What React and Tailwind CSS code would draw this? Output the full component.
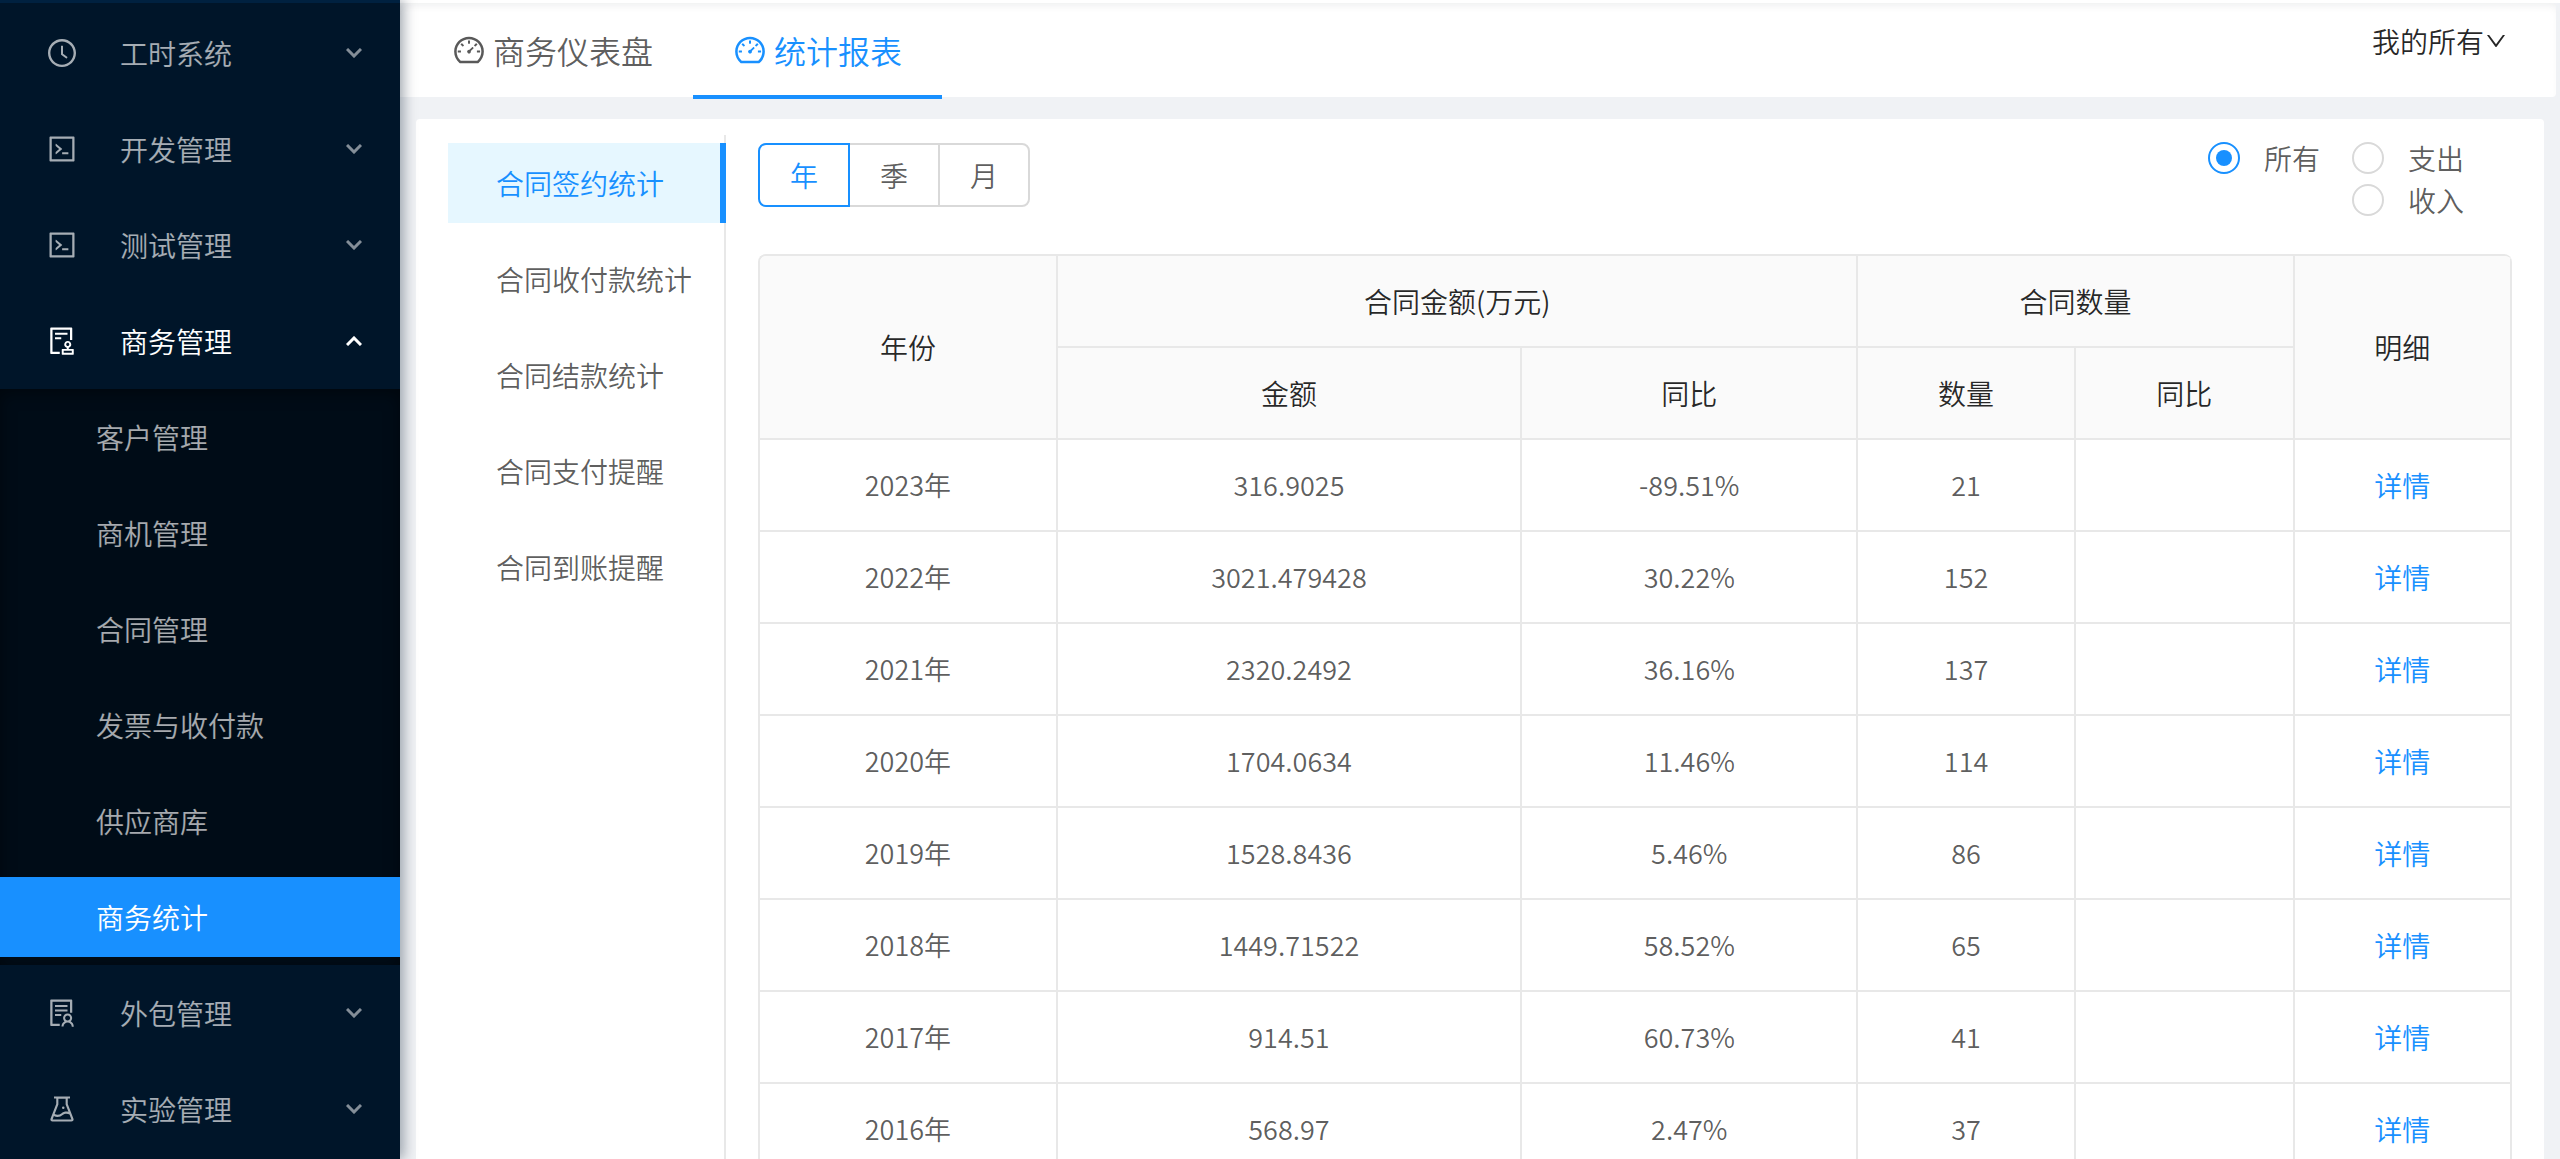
import React, { useState } from 'react';
import {
  AiOutlineAudit,
  AiOutlineClockCircle,
  AiOutlineCode,
  AiOutlineDashboard,
  AiOutlineDown,
  AiOutlineExperiment,
  AiOutlineSolution,
} from 'react-icons/ai';

const menus = [
  { name: '工时系统', icon: AiOutlineClockCircle },
  { name: '开发管理', icon: AiOutlineCode },
  { name: '测试管理', icon: AiOutlineCode },
  {
    name: '商务管理',
    icon: AiOutlineAudit,
    children: ['客户管理', '商机管理', '合同管理', '发票与收付款', '供应商库', '商务统计'],
  },
  { name: '外包管理', icon: AiOutlineSolution },
  { name: '实验管理', icon: AiOutlineExperiment },
];

const tabs = ['商务仪表盘', '统计报表'];
const reports = ['合同签约统计', '合同收付款统计', '合同结款统计', '合同支付提醒', '合同到账提醒'];
const periods = ['年', '季', '月'];

const rows = [
  { year: '2023年', amount: '316.9025', rate: '-89.51%', count: 21 },
  { year: '2022年', amount: '3021.479428', rate: '30.22%', count: 152 },
  { year: '2021年', amount: '2320.2492', rate: '36.16%', count: 137 },
  { year: '2020年', amount: '1704.0634', rate: '11.46%', count: 114 },
  { year: '2019年', amount: '1528.8436', rate: '5.46%', count: 86 },
  { year: '2018年', amount: '1449.71522', rate: '58.52%', count: 65 },
  { year: '2017年', amount: '914.51', rate: '60.73%', count: 41 },
  { year: '2016年', amount: '568.97', rate: '2.47%', count: 37 },
];

function Arrow({ open }) {
  return (
    <svg
      viewBox="0 0 16 10"
      fill="none"
      stroke="currentColor"
      strokeWidth="3"
      className={open ? 'h-[10px] w-4 rotate-180' : 'h-[10px] w-4 opacity-80'}
    >
      <path d="M1 1l7 7 7-7" />
    </svg>
  );
}

function Sidebar() {
  const [active, setActive] = useState('商务统计');
  const [open, setOpen] = useState('商务管理');

  return (
    <aside className="z-10 w-[400px] shrink-0 overflow-hidden border-t-3 border-[#002140] bg-[#001529] pt-[2px] text-[28px] text-white/65 shadow-[4px_0_12px_rgba(0,21,41,0.35)]">
      {menus.map(({ name, icon: Icon, children }) => {
        const isOpen = open === name && !!children;
        return (
          <div key={name}>
            <div className="py-2">
              <button
                onClick={() => setOpen(isOpen ? '' : name)}
                className={`flex h-20 w-full items-center pr-[38px] pl-[46px] ${isOpen ? 'text-white' : ''}`}
              >
                <Icon className="mr-[42px] size-8" />
                <span className="flex-1 text-left">{name}</span>
                <Arrow open={isOpen} />
              </button>
            </div>
            {isOpen && (
              <ul className="flex flex-col gap-4 bg-[#000c17] py-2 shadow-[inset_0_4px_16px_rgba(0,0,0,0.45)]">
                {children.map((child) => (
                  <li key={child}>
                    <button
                      onClick={() => setActive(child)}
                      className={`h-20 w-full pl-24 text-left ${active === child ? 'bg-[#1890ff] text-white' : ''}`}
                    >
                      {child}
                    </button>
                  </li>
                ))}
              </ul>
            )}
          </div>
        );
      })}
    </aside>
  );
}

function Header() {
  const [tab, setTab] = useState('统计报表');

  return (
    <header className="mr-1 flex h-[94px] shrink-0 items-start justify-between rounded-r bg-white pr-12 pl-3 shadow-[inset_0_6px_8px_-4px_rgba(0,21,41,0.08)]">
      <nav className="flex">
        {tabs.map((t) => (
          <button
            key={t}
            onClick={() => setTab(t)}
            className={`flex h-24 items-center gap-[7px] border-b-4 px-10 pt-[2px] text-[32px] ${
              tab === t ? 'border-b-[#1890ff] text-[#1890ff]' : 'border-b-transparent text-black/65'
            }`}
          >
            <AiOutlineDashboard className="size-[34px]" />
            {t}
          </button>
        ))}
      </nav>
      <button aria-haspopup="menu" className="flex h-[76px] items-center text-[28px] text-black/85">
        我的所有
        <AiOutlineDown className="size-6" />
      </button>
    </header>
  );
}

function ReportMenu() {
  const [report, setReport] = useState(reports[0]);

  return (
    <ul className="flex w-[278px] shrink-0 flex-col gap-4 border-r-2 border-[#e8e8e8] pt-2 text-[28px]">
      {reports.map((r) => (
        <li key={r} className="-mr-[2px]">
          <button
            onClick={() => setReport(r)}
            className={`h-20 w-full pl-12 text-left whitespace-nowrap ${
              report === r ? 'border-r-6 border-[#1890ff] bg-[#e6f7ff] text-[#1890ff]' : 'text-black/65'
            }`}
          >
            {r}
          </button>
        </li>
      ))}
    </ul>
  );
}

function TypeRadio({ label, checked, onChange }) {
  return (
    <label className="flex h-[42px] items-center gap-6">
      <input
        type="radio"
        name="type"
        checked={checked}
        onChange={onChange}
        className="grid size-8 appearance-none place-content-center rounded-full border-2 border-[#d9d9d9] before:size-4 before:rounded-full checked:border-[#1890ff] checked:before:bg-[#1890ff]"
      />
      {label}
    </label>
  );
}

function Toolbar() {
  const [period, setPeriod] = useState('年');
  const [type, setType] = useState('所有');

  return (
    <div className="flex h-[119px] items-start justify-between pr-12 text-[28px] text-black/65">
      <div className="mt-2 flex">
        {periods.map((p) => (
          <button
            key={p}
            onClick={() => setPeriod(p)}
            className={`-ml-[2px] h-16 border-2 px-[30px] first:ml-0 first:rounded-l-lg last:rounded-r-lg ${
              period === p ? 'z-1 border-[#1890ff] text-[#1890ff]' : 'border-[#d9d9d9]'
            }`}
          >
            {p}
          </button>
        ))}
      </div>
      <div className="mt-[2px] flex gap-8">
        <TypeRadio label="所有" checked={type === '所有'} onChange={() => setType('所有')} />
        <div>
          <TypeRadio label="支出" checked={type === '支出'} onChange={() => setType('支出')} />
          <TypeRadio label="收入" checked={type === '收入'} onChange={() => setType('收入')} />
        </div>
      </div>
    </div>
  );
}

function Th({ children, ...rest }) {
  return (
    <th {...rest} className="border-r-2 border-b-2 border-[#e8e8e8] bg-[#fafafa] font-[350]">
      {children}
    </th>
  );
}

function Td({ children }) {
  return <td className="border-r-2 border-b-2 border-[#e8e8e8]">{children}</td>;
}

function StatTable() {
  return (
    <div className="overflow-hidden rounded-t-lg border-t-2 border-l-2 border-[#e8e8e8]">
      <table className="w-full table-fixed border-separate border-spacing-0 text-center">
        <colgroup>
          <col className="w-[17%]" />
          <col className="w-[26.5%]" />
          <col className="w-[19.2%]" />
          <col className="w-[12.4%]" />
          <col className="w-[12.5%]" />
          <col className="w-[12.4%]" />
        </colgroup>
        <thead className="text-[28px] text-black/85">
          <tr className="h-[92px]">
            <Th rowSpan={2}>年份</Th>
            <Th colSpan={2}>合同金额(万元)</Th>
            <Th colSpan={2}>合同数量</Th>
            <Th rowSpan={2}>明细</Th>
          </tr>
          <tr className="h-[92px]">
            <Th>金额</Th>
            <Th>同比</Th>
            <Th>数量</Th>
            <Th>同比</Th>
          </tr>
        </thead>
        <tbody className="text-[27px] text-black/65">
          {rows.map((row) => (
            <tr key={row.year} className="h-[92px]">
              <Td>{row.year}</Td>
              <Td>{row.amount}</Td>
              <Td>{row.rate}</Td>
              <Td>{row.count}</Td>
              <Td />
              <Td>
                <a href="#detail" className="text-[28px] text-[#1890ff]">
                  详情
                </a>
              </Td>
            </tr>
          ))}
        </tbody>
      </table>
    </div>
  );
}

function App() {
  return (
    <div className="flex h-screen overflow-hidden bg-[#f0f2f5] font-['Noto_Sans_CJK_SC',sans-serif] font-[350]">
      <Sidebar />
      <div className="flex min-w-0 flex-1 flex-col border-t-3 border-white">
        <Header />
        {/* Report card - runs on below the fold */}
        <main className="mt-[22px] mr-4 ml-4 flex min-h-0 flex-1 rounded-t bg-white px-8 pt-4">
          <ReportMenu />
          <section className="min-w-0 flex-1 overflow-hidden pl-8">
            <Toolbar />
            <StatTable />
          </section>
        </main>
      </div>
    </div>
  );
}

export default App;
